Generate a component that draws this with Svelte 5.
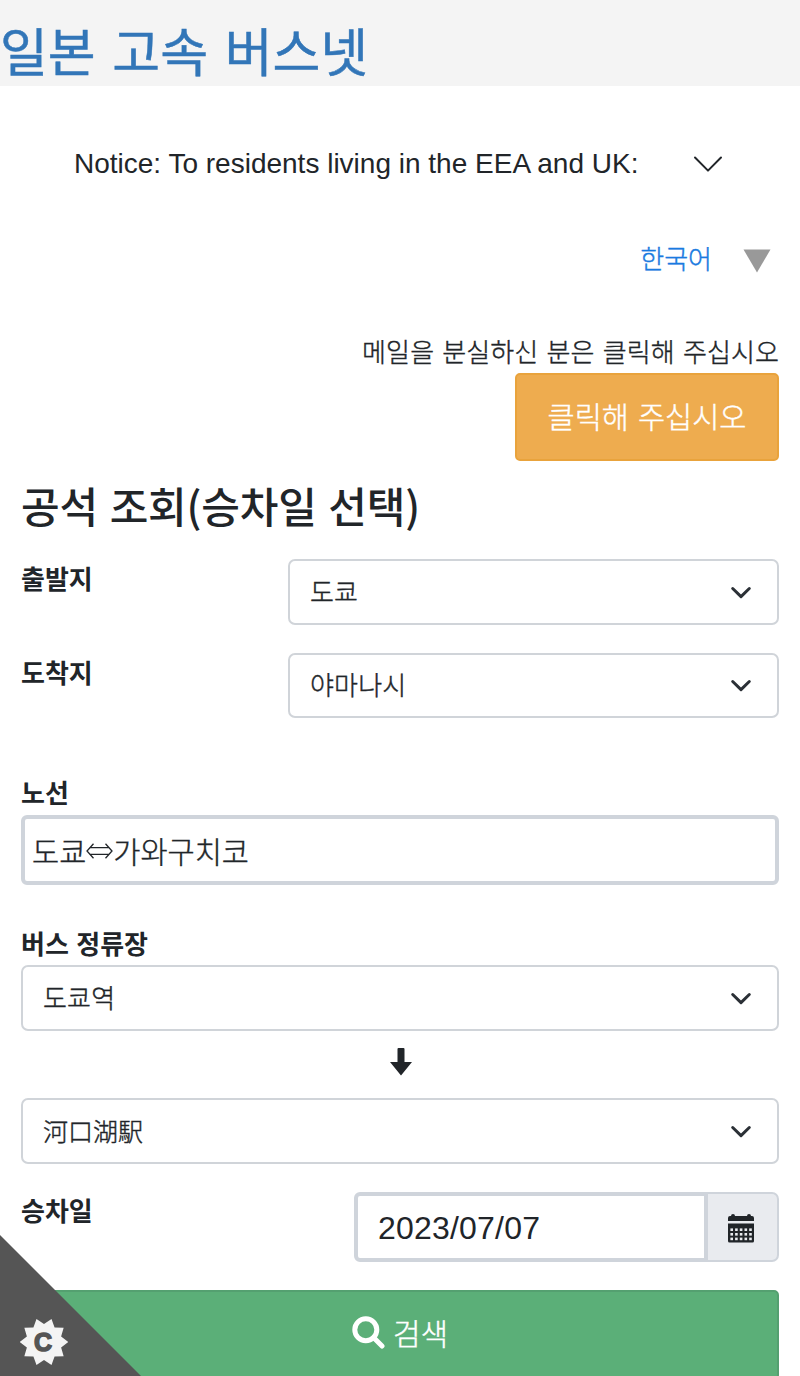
<script>
  const areas = [
    { label: '출발지', value: '도쿄' },
    { label: '도착지', value: '야마나시' }
  ];
  const dots = [0, 1, 2].flatMap((r) => [0, 1, 2, 3, 4].map((c) => ({ x: 2.4 + c * 4.7, y: 14.4 + r * 4.6 })));
  const star = Array.from({ length: 20 }, (_, i) => {
    const r = i % 2 ? 18 : 24.3;
    const a = (i * Math.PI) / 10;
    return `${(25 + r * Math.cos(a)).toFixed(2)},${(25 + r * Math.sin(a)).toFixed(2)}`;
  }).join(' ');
</script>

{#snippet chevron()}
  <svg class="chevron" width="22" height="14" viewBox="0 0 22 14"><path d="M2.7 2.5 11 10.6 19.3 2.5" /></svg>
{/snippet}

<div class="page">
  <header><h1>일본 고속 버스넷</h1></header>

  <div class="notice">
    <span>Notice: To residents living in the EEA and UK:</span>
    <svg width="30" height="18" viewBox="0 0 30 18"><path d="M2 2.500 15 15.600 28 2.500" /></svg>
  </div>

  <div class="language">
    <a>한국어</a>
    <svg width="28" height="24" viewBox="0 0 28 24"><path d="M.5.5h27L14 23.5z" /></svg>
  </div>

  <main>
    <div class="mail">
      <p>메일을 분실하신 분은 클릭해 주십시오</p>
      <button class="warn">클릭해 주십시오</button>
    </div>

    <h2>공석 조회(승차일 선택)</h2>

    {#each areas as area}
      <div class="row">
        <span class="label">{area.label}</span>
        <div class="select"><span>{area.value}</span>{@render chevron()}</div>
      </div>
    {/each}

    <div class="label route-label">노선</div>
    <div class="route">도쿄<svg width="27" height="16" viewBox="0 0 27 16"><path d="M7.500.8 1 8l6.500 7.200M19.500.8 26 8l-6.500 7.200M4 4.700h19M4 11.300h19" /></svg>가와구치코</div>

    <div class="label stop-label">버스 정류장</div>
    <div class="select"><span>도쿄역</span>{@render chevron()}</div>
    <div class="down">
      <svg width="22" height="28" viewBox="0 0 22 28"><path d="M7.500 1q0-1 1-1h5q1 0 1 1v13H22L11 27.500 0 14h7.500z" /></svg>
    </div>
    <div class="select"><span class="jp">河口湖駅</span>{@render chevron()}</div>

    <div class="date-row">
      <span class="label">승차일</span>
      <div class="date">
        <div class="field">2023/07/07</div>
        <div class="addon">
          <svg width="26" height="29" viewBox="0 0 26 29">
            <path d="M0 7V4q0-2 2-2h1q0-2 2-2t2 2h12q0-2 2-2t2 2h1q2 0 2 2v3zM0 9.500h26V27q0 1.500-1.500 1.500h-23Q0 28.500 0 27z" />
            {#each dots as d}<rect x={d.x} y={d.y} width="2.600" height="2.600" fill="#e9ebef" />{/each}
          </svg>
        </div>
      </div>
    </div>

    <button class="search">
      <svg width="33" height="33" viewBox="0 0 33 33"><circle cx="13.800" cy="13.800" r="11" /><path d="m21.500 21.500 8.500 8.500" /></svg>
      <span>검색</span>
    </button>
  </main>

  <div class="corner">
    <svg width="50" height="50" viewBox="0 0 50 50"><polygon points={star} /></svg>
    <b>C</b>
  </div>
</div>

<style>
  :global(body) { margin: 0; background: #fff; overflow: hidden; }
  * { box-sizing: border-box; }
  .page {
    position: relative; height: 1376px; overflow: hidden;
    font-family: "Noto Sans CJK KR", "Liberation Sans", sans-serif;
    font-size: 26px; line-height: 36px; color: #212529; font-weight: 300;
  }
  svg { display: block; flex: none; }
  header { height: 86px; background: #f4f4f4; padding-top: 15px; }
  h1 { margin: 0; font-size: 52px; line-height: 70px; font-weight: 400; color: #3276b8; word-spacing: 5px; white-space: nowrap; -webkit-text-stroke: .5px; }
  .notice {
    height: 154px; padding: 2px 77px 0 74px; display: flex; align-items: center; justify-content: space-between;
    font: 400 28px/36px "Liberation Sans", sans-serif; white-space: nowrap;
  }
  .notice svg { fill: none; stroke: #212529; stroke-width: 2; stroke-linecap: round; stroke-linejoin: round; }
  .language { height: 36px; display: flex; justify-content: flex-end; align-items: center; gap: 31px; padding-right: 29px; }
  .language a { color: #1a7ae0; -webkit-text-stroke: .4px; }
  .language svg { fill: #999; margin-top: 6px; }
  main { padding: 57px 21px 0 21px; display: flex; flex-direction: column; }
  .mail { display: flex; flex-direction: column; align-items: flex-end; }
  .mail p { margin: 0 0 4px; white-space: nowrap; word-spacing: 2.300px; letter-spacing: .1px; -webkit-text-stroke: .4px; }
  button { font: inherit; color: #fff; padding: 0; }
  .warn { width: 264px; height: 88px; border: 2px solid #e9a33c; border-radius: 5px; background: #eeac4f; font-size: 29.500px; word-spacing: 2.500px; padding-bottom: 4px; -webkit-text-stroke: .4px; }
  h2 { margin: 14px 0 22px; font-size: 42px; line-height: 60px; height: 62px; font-weight: 500; white-space: nowrap; word-spacing: 2.500px; letter-spacing: -.2px; }
  .row { height: 94px; display: flex; justify-content: space-between; align-items: flex-start; }
  .label { font-weight: 700; word-spacing: 1.500px; }
  .row .label { padding-top: 1px; }
  .select {
    height: 66px; border: 2px solid #d0d4d9; border-radius: 7px; padding: 0 25px 3px 20px;
    display: flex; justify-content: space-between; align-items: center; background: #fff;
    letter-spacing: .2px; -webkit-text-stroke: .4px;
  }
  .row .select { width: 491px; }
  .row:nth-of-type(3) .select { height: 65px; }
  .chevron { fill: none; stroke: #2b3036; stroke-width: 3; stroke-linecap: round; stroke-linejoin: round; margin-top: 4px; }
  .jp { font-family: "Noto Sans CJK JP", sans-serif; font-size: 25px; letter-spacing: 0; }
  .route-label { margin-top: 27px; height: 41px; }
  .route { height: 70px; border: 4px solid #cfd4db; border-radius: 6px; padding: 0 7px; display: flex; align-items: center; font-size: 29.500px; -webkit-text-stroke: .4px; }
  .route svg { fill: none; stroke: #212529; stroke-width: 1.3; margin-top: 2px; }
  .stop-label { margin-top: 40px; height: 40px; }
  .down { height: 67px; display: flex; justify-content: center; padding: 17px 0 0 2px; }
  .down svg { fill: #212529; }
  .date-row { margin-top: 28px; height: 98px; display: flex; justify-content: space-between; align-items: flex-start; }
  .date { display: flex; width: 425px; height: 70px; }
  .field {
    flex: 1; border: 4px solid #cfd4db; border-radius: 6px 0 0 6px; padding-left: 20px;
    font: 400 32px/64px "Liberation Sans", sans-serif; letter-spacing: .2px;
  }
  .addon { width: 71px; border: 2px solid #cfd4db; border-left: 0; border-radius: 0 7px 7px 0; background: #e9ebef; display: flex; align-items: center; justify-content: center; padding: 3px 3px 0 0; }
  .addon svg { fill: #212529; }
  .search {
    height: 90px; border: 2px solid #54a070; border-radius: 5px; background: #5baf78;
    display: flex; justify-content: center; align-items: center; gap: 8px; font-size: 30px; padding-bottom: 6px;
    -webkit-text-stroke: .4px;
  }
  .search svg { fill: none; stroke: #fff; stroke-width: 5; stroke-linecap: round; }
  .corner { position: absolute; left: 0; bottom: 0; width: 141px; height: 141px; background: #555; clip-path: polygon(0 0, 100% 100%, 0 100%); }
  .corner svg { position: absolute; left: 19px; top: 82px; fill: #f4f4f4; }
  .corner b { position: absolute; left: 18px; top: 82px; width: 50px; text-align: center; font: 700 25px/50px "Liberation Sans", sans-serif; color: #555; -webkit-text-stroke: 1.500px #555; }
</style>
